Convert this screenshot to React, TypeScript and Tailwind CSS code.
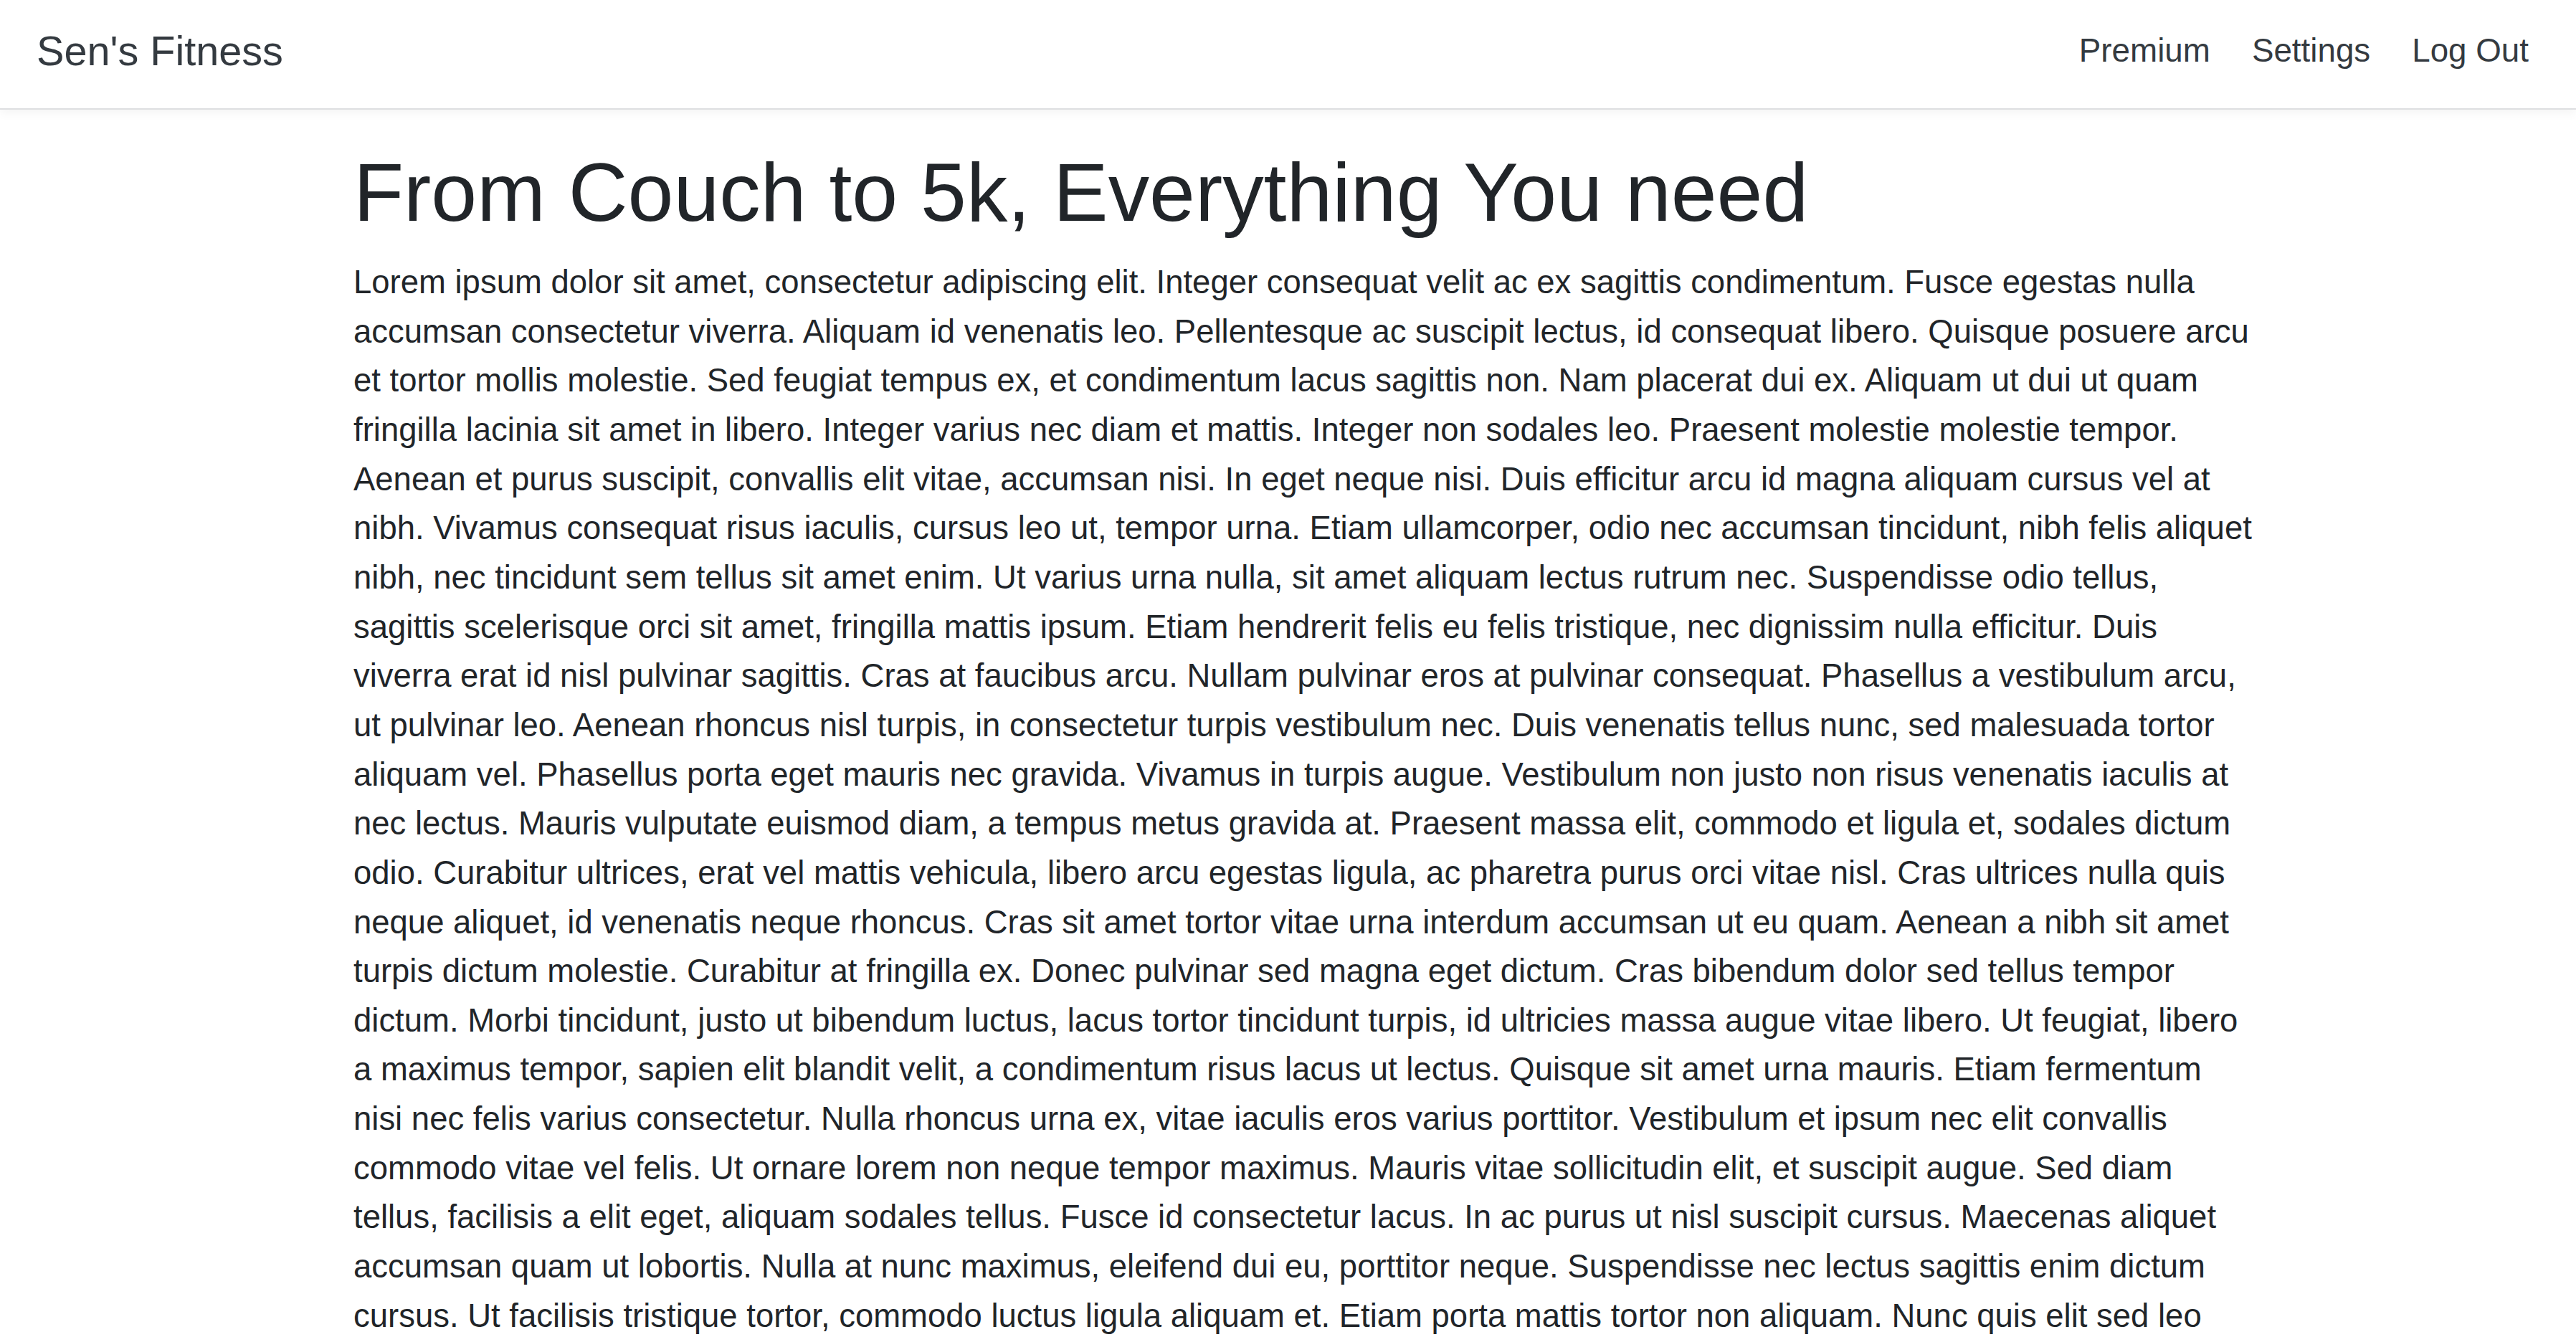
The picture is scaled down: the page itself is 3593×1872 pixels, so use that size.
import React from 'react';

const navItems = ['Premium', 'Settings', 'Log Out'];

const bodyText =
  'Lorem ipsum dolor sit amet, consectetur adipiscing elit. Integer consequat velit ac ex sagittis condimentum. Fusce egestas nulla accumsan consectetur viverra. Aliquam id venenatis leo. Pellentesque ac suscipit lectus, id consequat libero. Quisque posuere arcu et tortor mollis molestie. Sed feugiat tempus ex, et condimentum lacus sagittis non. Nam placerat dui ex. Aliquam ut dui ut quam fringilla lacinia sit amet in libero. Integer varius nec diam et mattis. Integer non sodales leo. Praesent molestie molestie tempor. Aenean et purus suscipit, convallis elit vitae, accumsan nisi. In eget neque nisi. Duis efficitur arcu id magna aliquam cursus vel at nibh. Vivamus consequat risus iaculis, cursus leo ut, tempor urna. Etiam ullamcorper, odio nec accumsan tincidunt, nibh felis aliquet nibh, nec tincidunt sem tellus sit amet enim. Ut varius urna nulla, sit amet aliquam lectus rutrum nec. Suspendisse odio tellus, sagittis scelerisque orci sit amet, fringilla mattis ipsum. Etiam hendrerit felis eu felis tristique, nec dignissim nulla efficitur. Duis viverra erat id nisl pulvinar sagittis. Cras at faucibus arcu. Nullam pulvinar eros at pulvinar consequat. Phasellus a vestibulum arcu, ut pulvinar leo. Aenean rhoncus nisl turpis, in consectetur turpis vestibulum nec. Duis venenatis tellus nunc, sed malesuada tortor aliquam vel. Phasellus porta eget mauris nec gravida. Vivamus in turpis augue. Vestibulum non justo non risus venenatis iaculis at nec lectus. Mauris vulputate euismod diam, a tempus metus gravida at. Praesent massa elit, commodo et ligula et, sodales dictum odio. Curabitur ultrices, erat vel mattis vehicula, libero arcu egestas ligula, ac pharetra purus orci vitae nisl. Cras ultrices nulla quis neque aliquet, id venenatis neque rhoncus. Cras sit amet tortor vitae urna interdum accumsan ut eu quam. Aenean a nibh sit amet turpis dictum molestie. Curabitur at fringilla ex. Donec pulvinar sed magna eget dictum. Cras bibendum dolor sed tellus tempor dictum. Morbi tincidunt, justo ut bibendum luctus, lacus tortor tincidunt turpis, id ultricies massa augue vitae libero. Ut feugiat, libero a maximus tempor, sapien elit blandit velit, a condimentum risus lacus ut lectus. Quisque sit amet urna mauris. Etiam fermentum nisi nec felis varius consectetur. Nulla rhoncus urna ex, vitae iaculis eros varius porttitor. Vestibulum et ipsum nec elit convallis commodo vitae vel felis. Ut ornare lorem non neque tempor maximus. Mauris vitae sollicitudin elit, et suscipit augue. Sed diam tellus, facilisis a elit eget, aliquam sodales tellus. Fusce id consectetur lacus. In ac purus ut nisl suscipit cursus. Maecenas aliquet accumsan quam ut lobortis. Nulla at nunc maximus, eleifend dui eu, porttitor neque. Suspendisse nec lectus sagittis enim dictum cursus. Ut facilisis tristique tortor, commodo luctus ligula aliquam et. Etiam porta mattis tortor non aliquam. Nunc quis elit sed leo';

const App: React.FC = () => {
  return (
    <div className="min-h-screen bg-white font-['Liberation_Sans',Arial,sans-serif] text-[#212529]">
      {/* Navbar */}
      <nav className="relative z-10 flex items-center justify-between h-[153px] pb-[9px] bg-white border-b-2 border-[#dedfe1] shadow-[0_4px_14px_rgba(0,0,0,0.05)]">
        <a className="pl-[51px] text-[57.6px] leading-[1.5] text-[#343a40]">Sen's Fitness</a>
        <ul className="flex items-center gap-[58px] pr-[66px]">
          {navItems.map((item) => (
            <li key={item}>
              <a className="text-[45.76px] leading-[1.5] text-[#343a40]">{item}</a>
            </li>
          ))}
        </ul>
      </nav>

      {/* Content */}
      <main className="pl-[493px]">
        <div className="w-[2658px]">
          <h1 className="mt-[47px] mb-[22.9px] text-[114.8px] leading-[137.3px] font-normal text-[#212529]">
            From Couch to 5k, Everything You need
          </h1>
          <p className="text-[45.48px] leading-[68.64px] text-[#212529]">{bodyText}</p>
        </div>
      </main>
    </div>
  );
};

export default App;
